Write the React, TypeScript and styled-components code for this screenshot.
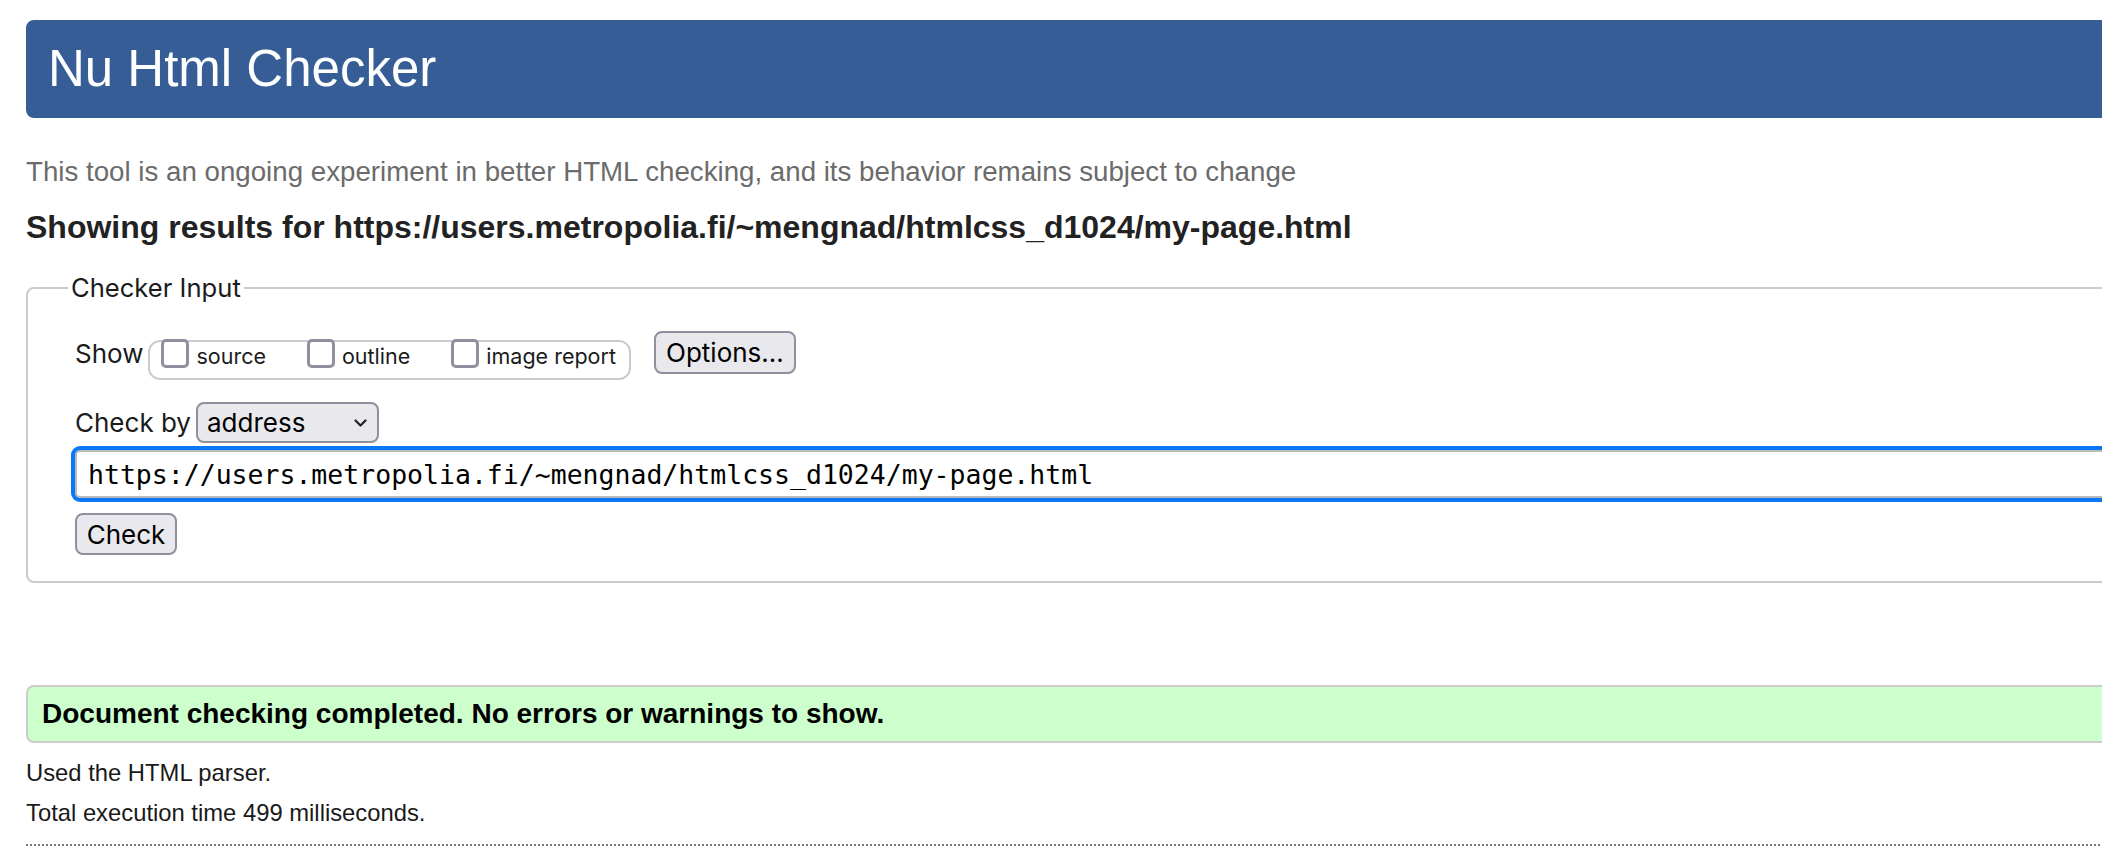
import React from 'react';
import styled, { createGlobalStyle } from 'styled-components';

const GlobalStyle = createGlobalStyle`
	html, body {
		margin: 0;
		padding: 0;
		background: #fff;
		overflow: hidden;
	}
	body {
		font-family: 'Liberation Sans', Arial, sans-serif;
		color: #000;
	}
`;

const ui = `Inter, 'Noto Sans', sans-serif`;

const Page = styled.div`
	width: 2400px;
	box-sizing: border-box;
	padding: 20px 0 0 26px;
	display: flex;
	flex-direction: column;
`;

const Banner = styled.h1`
	margin: 0;
	height: 98px;
	box-sizing: border-box;
	padding: 24px 0 24px 22px;
	background: #365d95;
	color: #fff;
	border-radius: 8px;
	font-size: 51px;
	font-weight: normal;
	line-height: 50px;
`;

const Note = styled.p`
	margin: 38px 0 0;
	font-size: 27.7px;
	line-height: 32px;
	color: #6b6b6b;
`;

const Results = styled.h2`
	margin: 21px 0 0;
	font-size: 32px;
	line-height: 36px;
	font-weight: bold;
	color: #222;
`;

const Fieldset = styled.fieldset`
	margin: 28px 0 0;
	padding: 28px 0 26px 47px;
	border: 2px solid #ccc;
	border-radius: 8px;
	display: flex;
	flex-direction: column;
	min-width: 0;
`;

const Legend = styled.legend`
	font-family: ${ui};
	font-size: 25.6px;
	line-height: 30px;
	color: #1b1b1b;
	padding: 0 3px;
	margin-left: -7px;
`;

const Row = styled.div<{ $top?: number; $center?: boolean }>`
	display: flex;
	align-items: ${(p) => (p.$center ? 'center' : 'flex-start')};
	margin-top: ${(p) => p.$top || 0}px;
`;

const FieldLabel = styled.span<{ $top?: number; $gap?: number }>`
	font-family: ${ui};
	font-size: 26px;
	line-height: 40px;
	color: #1b1b1b;
	margin-top: ${(p) => p.$top || 0}px;
	margin-right: ${(p) => p.$gap || 0}px;
`;

const Pill = styled.span`
	margin-top: 9px;
	height: 40px;
	box-sizing: border-box;
	display: flex;
	align-items: center;
	gap: 41px;
	padding: 0 13px 9px 11px;
	border: 2px solid #ccc;
	border-radius: 12px;
`;

const Option = styled.label`
	display: flex;
	align-items: center;
	gap: 7px;
	font-family: ${ui};
	font-size: 21.5px;
	line-height: 26px;
	color: #1b1b1b;
`;

const Box = styled.input`
	appearance: none;
	margin: 0 0 5px;
	width: 28px;
	height: 29px;
	box-sizing: border-box;
	border: 3px solid #8f8f9d;
	border-radius: 5px;
	background: #fff;
`;

const Button = styled.button<{ $w: number; $h: number; $left?: number }>`
	width: ${(p) => p.$w}px;
	height: ${(p) => p.$h}px;
	margin-left: ${(p) => p.$left || 0}px;
	padding: 0;
	box-sizing: border-box;
	font-family: ${ui};
	font-size: 26px;
	color: #000;
	background: #e9e9ed;
	border: 2px solid #8f8f9d;
	border-radius: 8px;
`;

const SelectWrap = styled.span`
	position: relative;
	display: inline-flex;
`;

const Select = styled.select`
	appearance: none;
	width: 183px;
	height: 41px;
	box-sizing: border-box;
	padding: 0 0 0 9px;
	font-family: ${ui};
	font-size: 26px;
	color: #000;
	background: #e9e9ed;
	border: 2px solid #8f8f9d;
	border-radius: 8px;
`;

const Chevron = styled.svg`
	position: absolute;
	right: 12px;
	top: 17px;
	pointer-events: none;
`;

const UrlInput = styled.input`
	margin: 7px 0 0;
	width: 2200px;
	height: 48px;
	box-sizing: border-box;
	padding: 0 0 0 11px;
	font-family: 'DejaVu Sans Mono', monospace;
	font-size: 26.5px;
	color: #000;
	background: #fff;
	border: 2px solid #b9b9b9;
	border-radius: 5px;
	outline: 4px solid #0a78f5;
	outline-offset: 0;
`;

const Success = styled.div`
	margin-top: 102px;
	height: 58px;
	box-sizing: border-box;
	display: flex;
	align-items: center;
	padding-left: 14px;
	background: #ccffcc;
	border: 2px solid #ccc;
	border-radius: 8px;
	font-size: 28px;
	font-weight: bold;
`;

const Detail = styled.p<{ $top: number }>`
	margin: ${(p) => p.$top}px 0 0;
	font-size: 23.8px;
	line-height: 28px;
	color: #1a1a1a;
`;

const Rule = styled.hr`
	margin: 17px 0 0;
	border: 0;
	border-top: 2px dotted #777;
`;

export default function App() {
	return (
		<>
			<GlobalStyle />
			<Page>
				<Banner>Nu Html Checker</Banner>
				<Note>
					This tool is an ongoing experiment in better HTML checking, and its behavior remains subject to change
				</Note>
				<Results>Showing results for https://users.metropolia.fi/~mengnad/htmlcss_d1024/my-page.html</Results>

				<Fieldset>
					<Legend>Checker Input</Legend>
					<Row>
						<FieldLabel $top={3} $gap={5}>
							Show
						</FieldLabel>
						<Pill>
							<Option>
								<Box type='checkbox' />
								source
							</Option>
							<Option>
								<Box type='checkbox' />
								outline
							</Option>
							<Option>
								<Box type='checkbox' />
								image report
							</Option>
						</Pill>
						<Button type='button' $w={142} $h={43} $left={23}>
							Options...
						</Button>
					</Row>

					<Row $top={22} $center>
						<FieldLabel $gap={5}>Check by</FieldLabel>
						<SelectWrap>
							<Select defaultValue='address'>
								<option value='address'>address</option>
								<option value='file'>file upload</option>
								<option value='text'>text input</option>
							</Select>
							<Chevron width='13' height='8' viewBox='0 0 13 8'>
								<path d='M1.5 1.5 L6.5 6.5 L11.5 1.5' fill='none' stroke='#222' strokeWidth='2.2' strokeLinecap='round' strokeLinejoin='round' />
							</Chevron>
						</SelectWrap>
					</Row>

					<UrlInput
						type='url'
						readOnly
						defaultValue='https://users.metropolia.fi/~mengnad/htmlcss_d1024/my-page.html'
					/>

					<Row $top={15}>
						<Button type='submit' $w={102} $h={42}>
							Check
						</Button>
					</Row>
				</Fieldset>

				<Success>Document checking completed. No errors or warnings to show.</Success>
				<Detail $top={16}>Used the HTML parser.</Detail>
				<Detail $top={12}>Total execution time 499 milliseconds.</Detail>
				<Rule />
			</Page>
		</>
	);
}
